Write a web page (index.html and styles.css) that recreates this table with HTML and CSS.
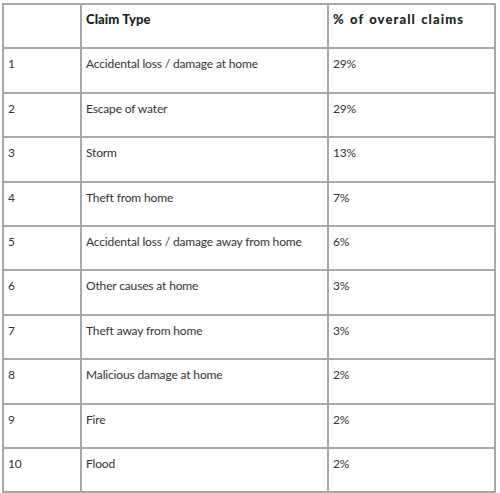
FILE: index.html
```html
<!DOCTYPE html>
<html>
<head>
<meta charset="utf-8">
<link rel="stylesheet" href="styles.css">
</head>
<body>
<table class="claims">
  <thead>
    <tr><th class="rank"></th><th class="type">Claim Type</th><th class="pct">% of overall claims</th></tr>
  </thead>
  <tbody>
    <tr><td>1</td><td>Accidental loss / damage at home</td><td>29%</td></tr>
    <tr><td>2</td><td>Escape of water</td><td>29%</td></tr>
    <tr><td>3</td><td>Storm</td><td>13%</td></tr>
    <tr><td>4</td><td>Theft from home</td><td>7%</td></tr>
    <tr><td>5</td><td>Accidental loss / damage away from home</td><td>6%</td></tr>
    <tr><td>6</td><td>Other causes at home</td><td>3%</td></tr>
    <tr><td>7</td><td>Theft away from home</td><td>3%</td></tr>
    <tr><td>8</td><td>Malicious damage at home</td><td>2%</td></tr>
    <tr><td>9</td><td>Fire</td><td>2%</td></tr>
    <tr><td>10</td><td>Flood</td><td>2%</td></tr>
  </tbody>
</table>
</body>
</html>
```
FILE: styles.css
```css
html, body {
  margin: 0;
  padding: 0;
  background: #ffffff;
}
body {
  padding: 3px 0 0 2px;
  font-family: Lato, "Liberation Sans", sans-serif;
  font-size: 12px;
  letter-spacing: -0.15px;
  color: #333333;
}
.claims {
  border-collapse: collapse;
  width: 494px;
  table-layout: fixed;
}
.claims th,
.claims td {
  border: 2px solid #a8a8a8;
  height: 44.4px;
  box-sizing: border-box;
  padding: 7px 4px 0 4px;
  text-align: left;
  vertical-align: top;
}
.claims th {
  font-size: 13px;
  font-weight: 900;
  letter-spacing: 0.1px;
  padding-top: 6px;
  color: #1a261a;
}
.claims th.pct {
  letter-spacing: 1.1px;
  word-spacing: 1px;
}
.claims .rank { width: 78px; }
.claims .type { width: 247px; }
```
